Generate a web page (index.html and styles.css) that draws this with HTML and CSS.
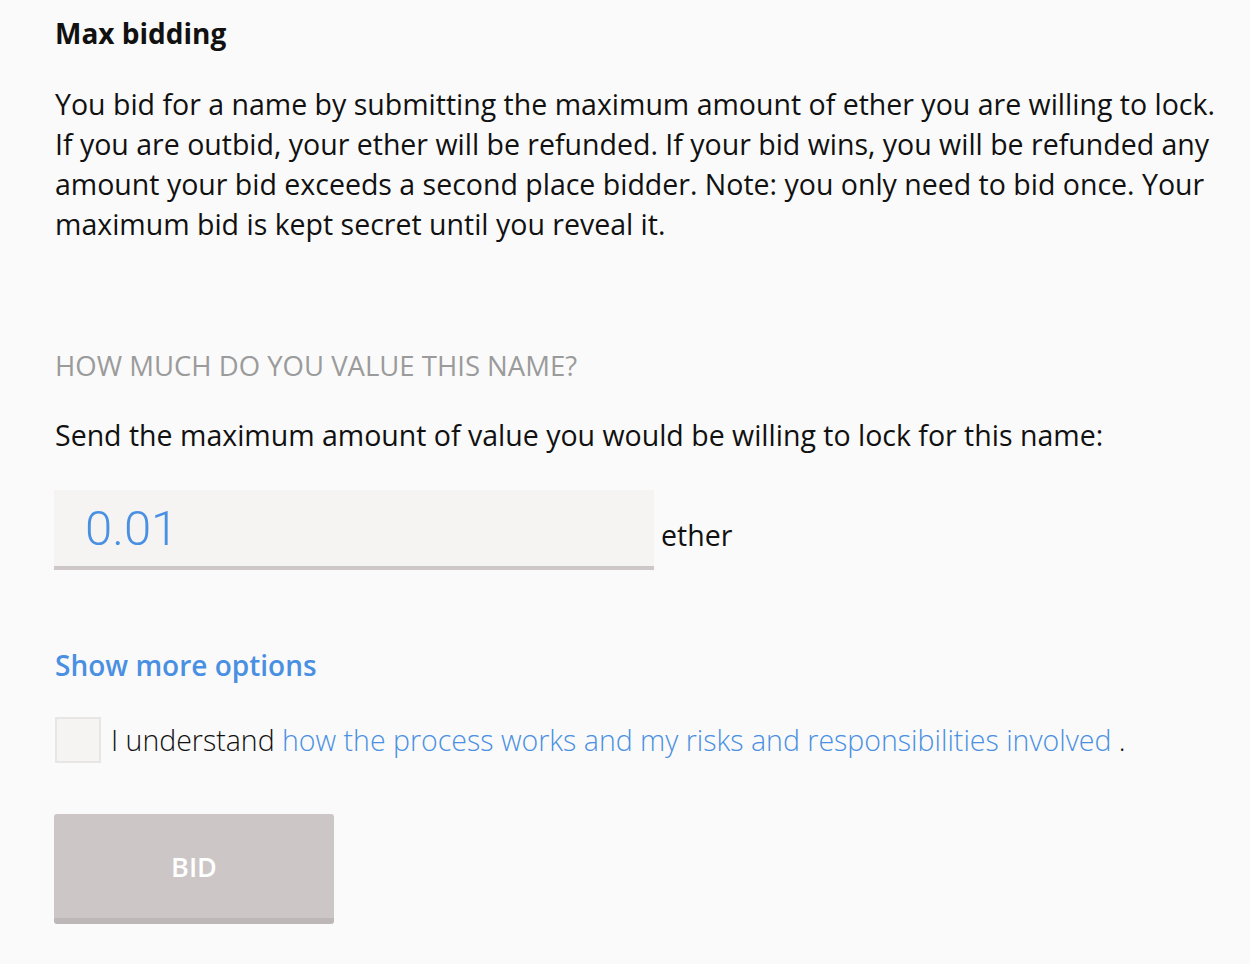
FILE: index.html
```html
<!DOCTYPE html>
<html lang="en">
<head>
  <meta charset="UTF-8" />
  <title>Max bidding</title>
  <link rel="stylesheet" href="styles.css">
</head>
<body>

<div class="bid-panel">
  <h2>Max bidding</h2>

  <p class="explain">
    You bid for a name by submitting the maximum amount of ether you are willing to lock.
    If you are outbid, your ether will be refunded. If your bid wins, you will be refunded any
    amount your bid exceeds a second place bidder. Note: you only need to bid once. Your
    maximum bid is kept secret until you reveal it.
  </p>

  <div class="section-label">HOW MUCH DO YOU VALUE THIS NAME?</div>

  <p class="send-text">Send the maximum amount of value you would be willing to lock for this name:</p>

  <div class="amount-row">
    <input class="amount-input" type="text" value="0.01">
    <span class="unit">ether</span>
  </div>

  <a class="more-options" href="#">Show more options</a>

  <label class="agree">
    <span class="check-box"></span>
    <span class="agree-text">I understand <a href="#">how the process works and my risks and responsibilities involved</a> .</span>
  </label>

  <button class="bid-btn" disabled>BID</button>
</div>

</body>
</html>
```

FILE: styles.css
```css
body {
  margin: 0;
  padding: 0;
  background-color: #fafafa;
  color: #111;
  font-family: 'Open Sans', sans-serif;
}

.bid-panel {
  padding: 13px 0 0 55px;
  width: 1170px;
}

h2 {
  font-size: 28px;
  font-weight: 700;
  margin: 0;
  line-height: 40px;
}

.explain {
  font-size: 28.5px;
  line-height: 40px;
  margin: 31px 0 0;
}

.section-label {
  color: #9b9b9b;
  font-size: 27.5px;
  line-height: 40px;
  margin-top: 102px;
}

.send-text {
  font-size: 28.5px;
  line-height: 40px;
  margin: 29px 0 0;
}

.amount-row {
  display: flex;
  align-items: center;
  margin-top: 35px;
  margin-left: -1px;
}

.amount-input {
  height: 76px;
  box-sizing: content-box;
  border: none;
  border-bottom: 4px solid #cdc7c7;
  background-color: #f5f4f3;
  color: #4a90e2;
  font-family: Roboto, 'Liberation Sans', sans-serif;
  font-weight: 300;
  font-size: 49px;
  padding: 0 0 0 31px;
  margin: 0;
  outline: none;
  width: 569px;
}

.unit {
  font-size: 28.5px;
  margin-left: 7px;
  padding-top: 10px;
}

.more-options {
  display: block;
  color: #4a90e2;
  font-size: 28px;
  font-weight: 600;
  text-decoration: none;
  margin-top: 75px;
  line-height: 40px;
}

.agree {
  display: flex;
  align-items: center;
  margin-top: 32px;
}

.check-box {
  width: 42px;
  height: 42px;
  background-color: #f5f4f3;
  border: 2px solid #e8e5e5;
  margin-right: 10px;
}

.agree-text {
  font-size: 28.5px;
  font-weight: 300;
}

.agree-text a {
  color: #4a90e2;
  text-decoration: none;
}

.bid-btn {
  display: block;
  margin-top: 51px;
  margin-left: -1px;
  width: 280px;
  height: 110px;
  border: none;
  border-bottom: 6px solid #bdb7b7;
  border-radius: 3px;
  background-color: #ccc6c6;
  color: #fff;
  font-family: 'Open Sans', sans-serif;
  font-size: 27px;
  font-weight: 600;
  padding: 0;
}
```
